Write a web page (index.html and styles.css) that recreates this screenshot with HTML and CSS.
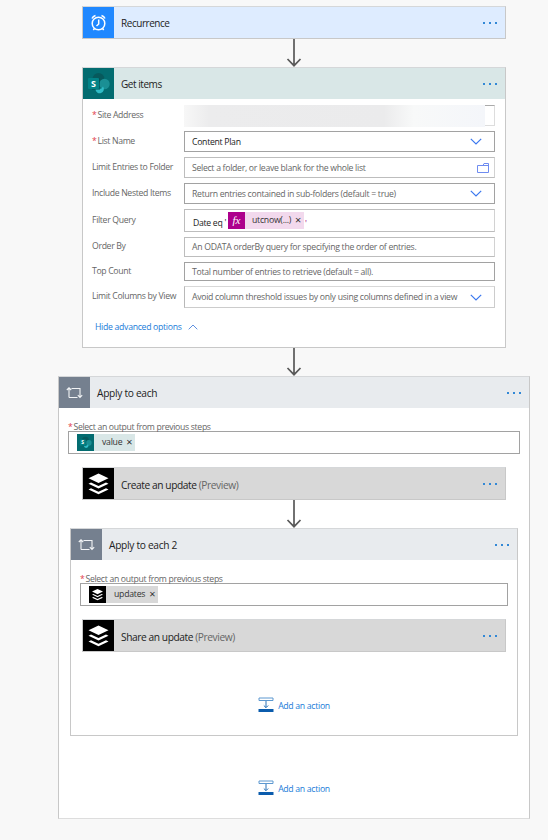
FILE: index.html
```
<!DOCTYPE html>
<html lang="en">
<head>
<meta charset="utf-8">
<title>Flow designer</title>
<link rel="stylesheet" href="styles.css">
</head>
<body>
<svg width="0" height="0" class="defs">
  <symbol id="arrow" viewBox="0 0 16 28"><path d="M8 0V26.5M1.5 20L8 26.7L14.5 20" fill="none" stroke="#595959" stroke-width="1.7"/></symbol>
  <symbol id="chev" viewBox="0 0 12 7"><path d="M.8.8L6 6L11.2.8" fill="none" stroke="#3b78ef" stroke-width="1.2"/></symbol>
  <symbol id="sharepoint" viewBox="0 0 31 31">
    <rect width="31" height="31" fill="#036c70"/>
    <circle cx="15.5" cy="11" r="6" fill="#07595c"/>
    <circle cx="21.5" cy="16" r="5.2" fill="#1a8f94"/>
    <path d="M12.500 21H16Q19 21 20 18.500A4.200 4.200 0 1 1 12.500 21Z" fill="#30bcc6"/>
    <path d="M9 10h8v12h-8z" fill="#024f52" opacity=".5"/>
    <rect x="5" y="10" width="11" height="11" rx="1" fill="#038387"/>
  </symbol>
  <symbol id="loop" viewBox="0 0 31 31"><path d="M10.500 20.500V11M8.300 13L10.500 10.800L12.700 13M13 11.500H21.500V20M19.300 18.200L21.500 20.400L23.700 18.200M10.500 20.500H19" transform="translate(-.5 0)" fill="none" stroke="#f2f4f6" stroke-width="1.1"/></symbol>
  <symbol id="buffer" viewBox="0 0 31 31">
    <rect width="31" height="31" fill="#000"/>
    <path fill="#fff" d="M15.5 5.5L25.5 10.2L15.5 15L5.500 10.2ZM5.500 15.700L8 14.500L15.500 18.100L23 14.500L25.500 15.700L15.500 20.500ZM5.500 21.400L8 20.200L15.500 23.800L23 20.200L25.500 21.400L15.500 26.200Z"/>
  </symbol>
  <symbol id="insert" viewBox="0 0 16 16"><path d="M1 1h14v2.500H1z" fill="#fff" stroke="#5d98d0"/><path d="M8 4v6.500M5.800 8.500L8 10.700L10.200 8.500" fill="none" stroke="#2a72b8"/><path d="M.5 12h15v3H.5z" fill="#0b5cad"/></symbol>
</svg>
<main class="flow">
  <section class="card step">
    <header class="head blue"><span class="icon"><svg viewBox="0 0 31 31"><g fill="none" stroke="#fff" stroke-width="1.500"><circle cx="15.500" cy="16.500" r="6.300"/><path d="M15.700 12.500V17L13.500 19M9 11.500Q10 9.300 12.500 8.500M22 11.500Q21 9.300 18.500 8.500M11.500 21.500L10.300 23M19.500 21.500L20.700 23"/></g></svg></span><h2>Recurrence</h2><i class="dots"></i></header>
  </section>
  <svg class="arrow"><use href="#arrow"/></svg>
  <section class="card step items">
    <header class="head teal"><span class="icon"><svg viewBox="0 0 31 31"><use href="#sharepoint"/><text x="10.400" y="18.800" text-anchor="middle" class="sp-letter">S</text></svg></span><h2>Get items</h2><i class="dots"></i></header>
    <div class="form">
      <label class="req">Site Address</label><div class="input masked"><span class="mask"></span></div>
      <label class="req">List Name</label><div class="input dark"><span class="strong">Content Plan</span><svg class="chev"><use href="#chev"/></svg></div>
      <label>Limit Entries to Folder</label><div class="input"><span>Select a folder, or leave blank for the whole list</span><svg class="folder" viewBox="0 0 12 10"><path d="M.5 2.500H6L7 .5H11.500V9.500H.5ZM6 2.500H11.500" fill="none" stroke="#6f8cf0"/></svg></div>
      <label>Include Nested Items</label><div class="input dark"><span>Return entries contained in sub-folders (default = true)</span><svg class="chev"><use href="#chev"/></svg></div>
      <label>Filter Query</label><div class="input query"><span class="strong date">Date eq '</span><span class="token pink"><b class="fx">fx</b><span>utcnow(...)</span><em>×</em></span><span class="quote">'</span></div>
      <label>Order By</label><div class="input"><span>An ODATA orderBy query for specifying the order of entries.</span></div>
      <label>Top Count</label><div class="input dark"><span>Total number of entries to retrieve (default = all).</span></div>
      <label>Limit Columns by View</label><div class="input light"><span>Avoid column threshold issues by only using columns defined in a view</span><svg class="chev"><use href="#chev"/></svg></div>
    </div>
    <a class="toggle"><span>Hide advanced options</span><svg viewBox="0 0 10 6"><path d="M.7 5.300L5 1L9.300 5.300" fill="none" stroke="#4d83dc" stroke-width=".9"/></svg></a>
  </section>
  <svg class="arrow second"><use href="#arrow"/></svg>
  <section class="card outer">
    <header class="head gray"><span class="icon"><svg><use href="#loop"/></svg></span><h2>Apply to each</h2><i class="dots"></i></header>
    <div class="pick">
      <label class="req">Select an output from previous steps</label>
      <div class="input dark"><span class="token aqua"><svg viewBox="0 0 31 31"><use href="#sharepoint"/><text x="10.400" y="18.800" text-anchor="middle" class="sp-letter">S</text></svg><span>value</span><em>×</em></span></div>
    </div>
    <section class="card step action">
      <header class="head silver"><span class="icon"><svg><use href="#buffer"/></svg></span><h2>Create an update <small>(Preview)</small></h2><i class="dots"></i></header>
    </section>
    <svg class="arrow"><use href="#arrow"/></svg>
    <section class="card inner">
      <header class="head gray"><span class="icon"><svg><use href="#loop"/></svg></span><h2>Apply to each 2</h2><i class="dots"></i></header>
      <div class="pick">
        <label class="req">Select an output from previous steps</label>
        <div class="input dark"><span class="token smoke"><svg><use href="#buffer"/></svg><span>updates</span><em>×</em></span></div>
      </div>
      <section class="card step action">
        <header class="head silver"><span class="icon"><svg><use href="#buffer"/></svg></span><h2>Share an update <small>(Preview)</small></h2><i class="dots"></i></header>
      </section>
      <a class="add"><svg><use href="#insert"/></svg><span>Add an action</span></a>
    </section>
    <a class="add"><svg><use href="#insert"/></svg><span>Add an action</span></a>
  </section>
</main>
</body>
</html>
```
FILE: styles.css
```
* { box-sizing: border-box; }
body { margin: 0; height: 840px; overflow: hidden; background: #f8f8f8; color: #222; font: 8.7px/12px "Open Sans", "Noto Sans", sans-serif; letter-spacing: -.3px; }
.defs { position: absolute; }
svg { display: block; flex: none; }
.flow { padding: 6px 18px 0 58px; display: flex; flex-direction: column; align-items: center; width: 548px; }
.card { display: flex; flex-direction: column; align-items: center; border: 1px solid #c8c8c8; border-top-color: #d5d7d9; background: #fff; flex: none; }
.step { width: 424px; height: 33px; }
.items { height: 281px; align-items: stretch; }
.outer { width: 472px; height: 443px; border-bottom-color: #ddd; }
.inner { width: 448px; height: 208px; }
.head { display: flex; align-items: center; width: 100%; height: 31px; padding-right: 8px; flex: none; }
.icon { width: 31px; height: 31px; }
.icon svg { width: 31px; height: 31px; }
.head h2 { margin: 0 auto 0 7px; font-size: 10.2px; font-weight: 400; line-height: 14px; letter-spacing: -.42px; white-space: nowrap; }
.gray h2 { letter-spacing: -.3px; }
.blue h2, .teal h2 { font-size: 10px; letter-spacing: -.45px; }
.silver h2 { padding-top: 2px; }
.head small { font-size: inherit; color: #666; }
.dots { width: 14px; height: 2px; background: repeating-linear-gradient(90deg, #3288d6 0 2px, transparent 2px 6px); }
.blue { background: #deecff; }
.blue .icon { background: #2088ff; }
.teal { background: #d9e7e7; }
.gray { background: #e8ebee; }
.gray .icon { background: #75808f; }
.silver { background: #d8d8d8; }
.arrow { width: 16px; height: 28px; }
.second { height: 28px; }
.sp-letter { font: 700 9px "Open Sans", sans-serif; fill: #fff; letter-spacing: 0; }
.form { display: grid; grid-template-columns: 92px 311px; grid-template-rows: 21px 21px 21px 21px 23px 20px 19px 22px; row-gap: 5px; padding: 6px 0 0 9px; }
.form label { align-self: center; position: relative; top: -1px; color: #666; white-space: nowrap; letter-spacing: -.34px; }
.req::before { content: "*"; color: #e23b4b; margin-right: 1px; }
.input { display: flex; align-items: center; justify-content: space-between; border: 1px solid #bdbdbd; border-right-color: #d2d2d2; background: #fff; color: #666; padding: 0 12px 0 7px; white-space: nowrap; }
.input.dark { border-color: #a2a2a2; }
.input.light { border-color: #d8d8d8 #ccc #ccc #b8b8b8; }
.input .strong { color: #222; }
.masked { padding: 0; border-color: #aaa #ddd #ddd transparent; justify-content: flex-start; }
.mask { width: 301px; height: 22px; margin-left: -1px; flex: none; background: linear-gradient(90deg, #f7f7f7 0, #ececed 25px, #ebebec 200px, #f8f9f9 230px, #f4f6fa 301px); }
.chev { width: 12px; height: 7px; }
.folder { width: 12px; height: 10px; margin-right: -7px; }
.query { justify-content: flex-start; padding-left: 8px; }
.date { padding-top: 5px; width: 35px; }
.quote { color: #a4007f; margin: 6px 0 0 1px; }
.token { display: flex; align-items: center; height: 17px; color: #333; }
.token svg, .fx { width: 17px; height: 17px; margin-right: 7px; }
.token em { font-style: normal; font-size: 11px; margin-left: 4px; letter-spacing: 0; }
.pink { width: 76px; background: #f2d9ed; margin-top: -1px; letter-spacing: -.25px; }
.fx { background: #ad008c; color: #fff; font: italic 11px/16px "Liberation Serif", serif; text-align: center; letter-spacing: 0; }
.aqua { background: #d9e7e7; width: 58px; }
.smoke { background: #d8d8d8; width: 69px; }
.pick .token svg { margin-right: 8px; }
.pick .token { margin-top: -1px; letter-spacing: -.25px; }
.toggle { display: flex; align-items: center; gap: 6px; margin: 13px 0 0 12px; color: #1a7bd8; letter-spacing: -.3px; }
.toggle svg { width: 10px; height: 6px; }
.pick { width: 100%; height: 59px; padding: 13px 9px 0; }
.pick label { display: block; height: 10px; color: #666; letter-spacing: -.33px; }
.pick .input { height: 23px; padding: 0 8px; }
.add { display: flex; align-items: center; gap: 4px; color: #1a7bd8; }
.add svg { width: 16px; height: 16px; }
.inner .add, .outer > .add { margin-top: 45px; }
.outer > .add { margin-top: 44px; }
.add span { padding-top: 1px; }
```
